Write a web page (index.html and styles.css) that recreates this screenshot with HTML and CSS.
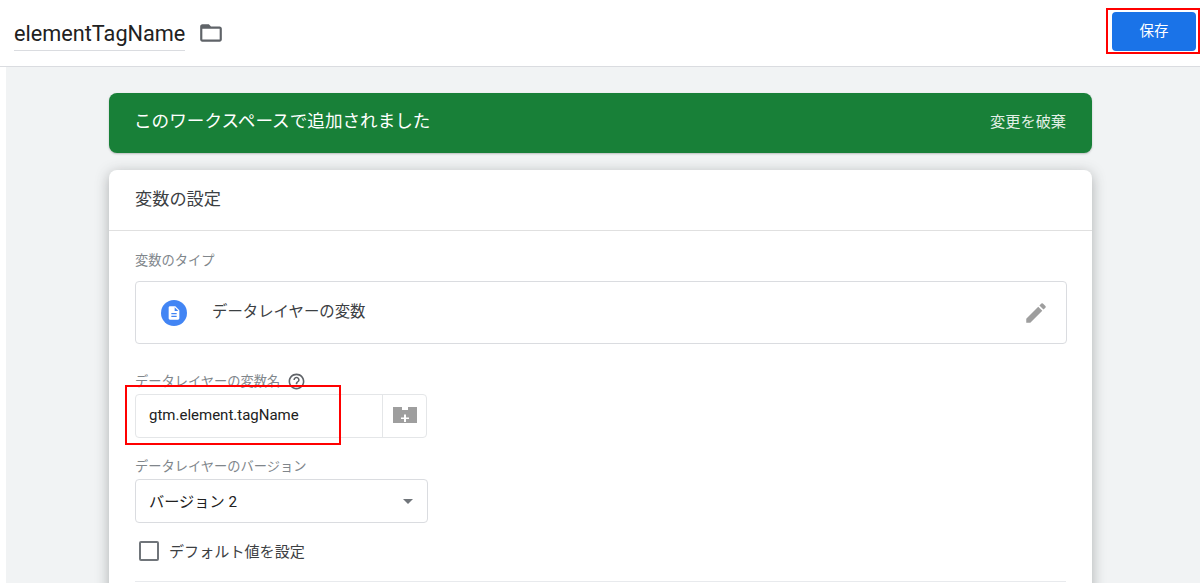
FILE: index.html
```html
<!DOCTYPE html>
<html lang="ja">
<head>
<meta charset="utf-8">
<title>elementTagName</title>
<link rel="stylesheet" href="styles.css">
</head>
<body>
<header class="topbar">
  <div class="title-group">
    <span class="title">elementTagName</span>
    <svg class="folder" viewBox="0 0 24 24" width="26" height="26"><path fill="#5f6368" d="M20 6h-8l-2-2H4c-1.1 0-2 .9-2 2v12c0 1.1.9 2 2 2h16c1.1 0 2-.9 2-2V8c0-1.1-.9-2-2-2zm0 12H4V8h16v10z"/></svg>
  </div>
  <button class="save">保存</button>
  <div class="mark mark-save"></div>
</header>
<main class="stage">
  <div class="banner">
    <span class="banner-text">このワークスペースで追加されました</span>
    <span class="banner-action">変更を破棄</span>
  </div>
  <section class="card">
    <h2 class="card-title">変数の設定</h2>
    <div class="card-body">
      <div class="label label-type">変数のタイプ</div>
      <div class="type-box">
        <span class="type-icon">
          <svg viewBox="0 0 24 24" width="16" height="16"><path fill="#fff" d="M14 2H6c-1.1 0-2 .9-2 2v16c0 1.1.9 2 2 2h12c1.1 0 2-.9 2-2V8l-6-6zm2 16H8v-2h8v2zm0-4H8v-2h8v2zm-3-5V3.5L18.5 9H13z"/></svg>
        </span>
        <span class="type-name">データレイヤーの変数</span>
        <svg class="pencil" viewBox="0 0 24 24" width="26" height="26"><path fill="#9e9e9e" d="M3 17.25V21h3.75L17.81 9.94l-3.75-3.75L3 17.25zM20.71 7.04a1 1 0 0 0 0-1.41l-2.34-2.34a1 1 0 0 0-1.41 0l-1.83 1.83 3.75 3.75 1.83-1.83z"/></svg>
      </div>
      <div class="label label-name">データレイヤーの変数名
        <svg class="help" viewBox="0 0 24 24" width="19" height="19"><path fill="#5f6368" d="M11 18h2v-2h-2v2zm1-16C6.48 2 2 6.48 2 12s4.48 10 10 10 10-4.48 10-10S17.52 2 12 2zm0 18c-4.41 0-8-3.59-8-8s3.59-8 8-8 8 3.59 8 8-3.59 8-8 8zm0-14c-2.21 0-4 1.79-4 4h2c0-1.1.9-2 2-2s2 .9 2 2c0 2-3 1.75-3 5h2c0-2.25 3-2.5 3-5 0-2.21-1.79-4-4-4z"/></svg>
      </div>
      <div class="input-row">
        <span class="input-value">gtm.element.tagName</span>
        <span class="input-addon">
          <svg viewBox="0 0 26 18" width="26" height="18"><path fill="#9e9e9e" d="M1 1h9v3h6V1h9v16H1z"/><path fill="#fff" d="M12 8.500h2v3h3v1.500h-3v3h-2v-3H9v-1.500h3z"/></svg>
        </span>
      </div>
      <div class="mark mark-input"></div>
      <div class="label label-version">データレイヤーのバージョン</div>
      <div class="select-box">
        <span class="select-value">バージョン 2</span>
        <span class="caret"></span>
      </div>
      <label class="check-row">
        <span class="checkbox"></span>
        <span class="check-text">デフォルト値を設定</span>
      </label>
      <div class="divider"></div>
    </div>
  </section>
</main>
</body>
</html>
```
FILE: styles.css
```css
* { box-sizing: border-box; }
html, body { margin: 0; height: 583px; overflow: hidden; background: #fff; }
body {
  font-family: Roboto, "Noto Sans CJK JP", sans-serif;
  color: #212121;
}
.topbar {
  position: relative;
  height: 67px;
  background: #fff;
  border-bottom: 1px solid #dadce0;
  display: flex;
  align-items: flex-start;
  justify-content: space-between;
  padding: 0 4px 0 14px;
}
.title-group { display: flex; align-items: center; gap: 13px; height: 66px; }
.title {
  font-size: 21.7px;
  line-height: 26px;
  border-bottom: 1px solid #dadce0;
  height: 51px;
  padding-top: 21px;
  align-self: flex-start;
}
.save {
  width: 84px;
  height: 39px;
  margin-top: 12px;
  border: 0;
  border-radius: 4px;
  background: #1a73e8;
  color: #fff;
  font: 14.5px/39px Roboto, "Noto Sans CJK JP", sans-serif;
  padding: 0;
}
.mark { position: absolute; border: 2px solid #ff0000; pointer-events: none; }
.mark-save { left: 1106px; top: 8px; width: 94px; height: 46px; }
.stage {
  height: 516px;
  margin-left: 6px;
  background: #f1f3f4;
  padding: 26px 108px 0 103px;
  overflow: hidden;
}
.banner {
  height: 60px;
  background: #188038;
  border-radius: 8px;
  display: flex;
  align-items: center;
  justify-content: space-between;
  padding: 0 26px;
  color: #fff;
  box-shadow: 0 1px 2px rgba(60,64,67,.3);
}
.banner-text { font-size: 17.6px; margin-top: -8px; margin-left: -1px; }
.banner-action { font-size: 15.2px; color: #e2efe6; margin-top: -7px; }
.card {
  position: relative;
  margin-top: 17px;
  background: #fff;
  border-radius: 8px 8px 0 0;
  box-shadow: 0 3px 14px rgba(60,64,67,.38);
  height: 460px;
}
.card-title {
  margin: 0;
  height: 61px;
  padding: 0 26px;
  font-size: 17.2px;
  font-weight: 400;
  line-height: 59px;
  color: #3c4043;
  border-bottom: 1px solid #e0e0e0;
}
.card-body { position: relative; padding: 0 26px; }
.label { font-size: 13.25px; color: #80868b; line-height: 18px; }
.label-type { padding-top: 21px; height: 50px; line-height: 18px; }
.type-box {
  display: flex;
  align-items: center;
  height: 63px;
  margin-right: -1px;
  border: 1px solid #dadce0;
  border-radius: 4px;
  padding: 0 17px 0 25px;
}
.type-icon {
  width: 26px;
  height: 26px;
  border-radius: 50%;
  background: #4285f4;
  display: flex;
  align-items: center;
  justify-content: center;
  flex: none;
}
.type-name { margin-left: 25px; font-size: 15.4px; color: #3c4043; flex: 1; margin-top: -6px; }
.pencil { flex: none; }
.label-name {
  display: flex;
  align-items: center;
  gap: 7px;
  margin-top: 26px;
  height: 24px;
}
.help { flex: none; margin-top: -2px; }
.input-row {
  display: flex;
  width: 292px;
  height: 44px;
  border: 1px solid #e4e6e8;
  border-radius: 4px;
}
.input-value {
  width: 247px;
  padding-left: 13px;
  font-size: 15px;
  line-height: 41px;
  color: #212121;
  border-right: 1px solid #e4e6e8;
}
.input-addon { flex: 1; display: flex; align-items: center; justify-content: center; margin-top: -2px; }
.mark-input { left: 16px; top: 154px; width: 216px; height: 60px; }
.label-version { margin-top: 18px; height: 23px; line-height: 22px; }
.select-box {
  display: flex;
  align-items: center;
  justify-content: space-between;
  width: 293px;
  height: 44px;
  border: 1px solid #dadce0;
  border-radius: 4px;
  padding: 0 14px 0 13px;
}
.select-value { font-size: 15.2px; color: #212121; margin-top: -3px; }
.caret {
  width: 0;
  height: 0;
  border-left: 5.5px solid transparent;
  border-right: 5.5px solid transparent;
  border-top: 5.5px solid #70757a;
}
.check-row { display: flex; align-items: center; gap: 10px; margin-top: 18px; padding-left: 4px; height: 20px; }
.checkbox { width: 20px; height: 20px; border: 2px solid #70757a; border-radius: 2px; flex: none; }
.check-text { font-size: 15.1px; color: #3c4043; margin-top: -2px; }
.divider { height: 1px; background: #e8eaed; margin-top: 20px; }
```
